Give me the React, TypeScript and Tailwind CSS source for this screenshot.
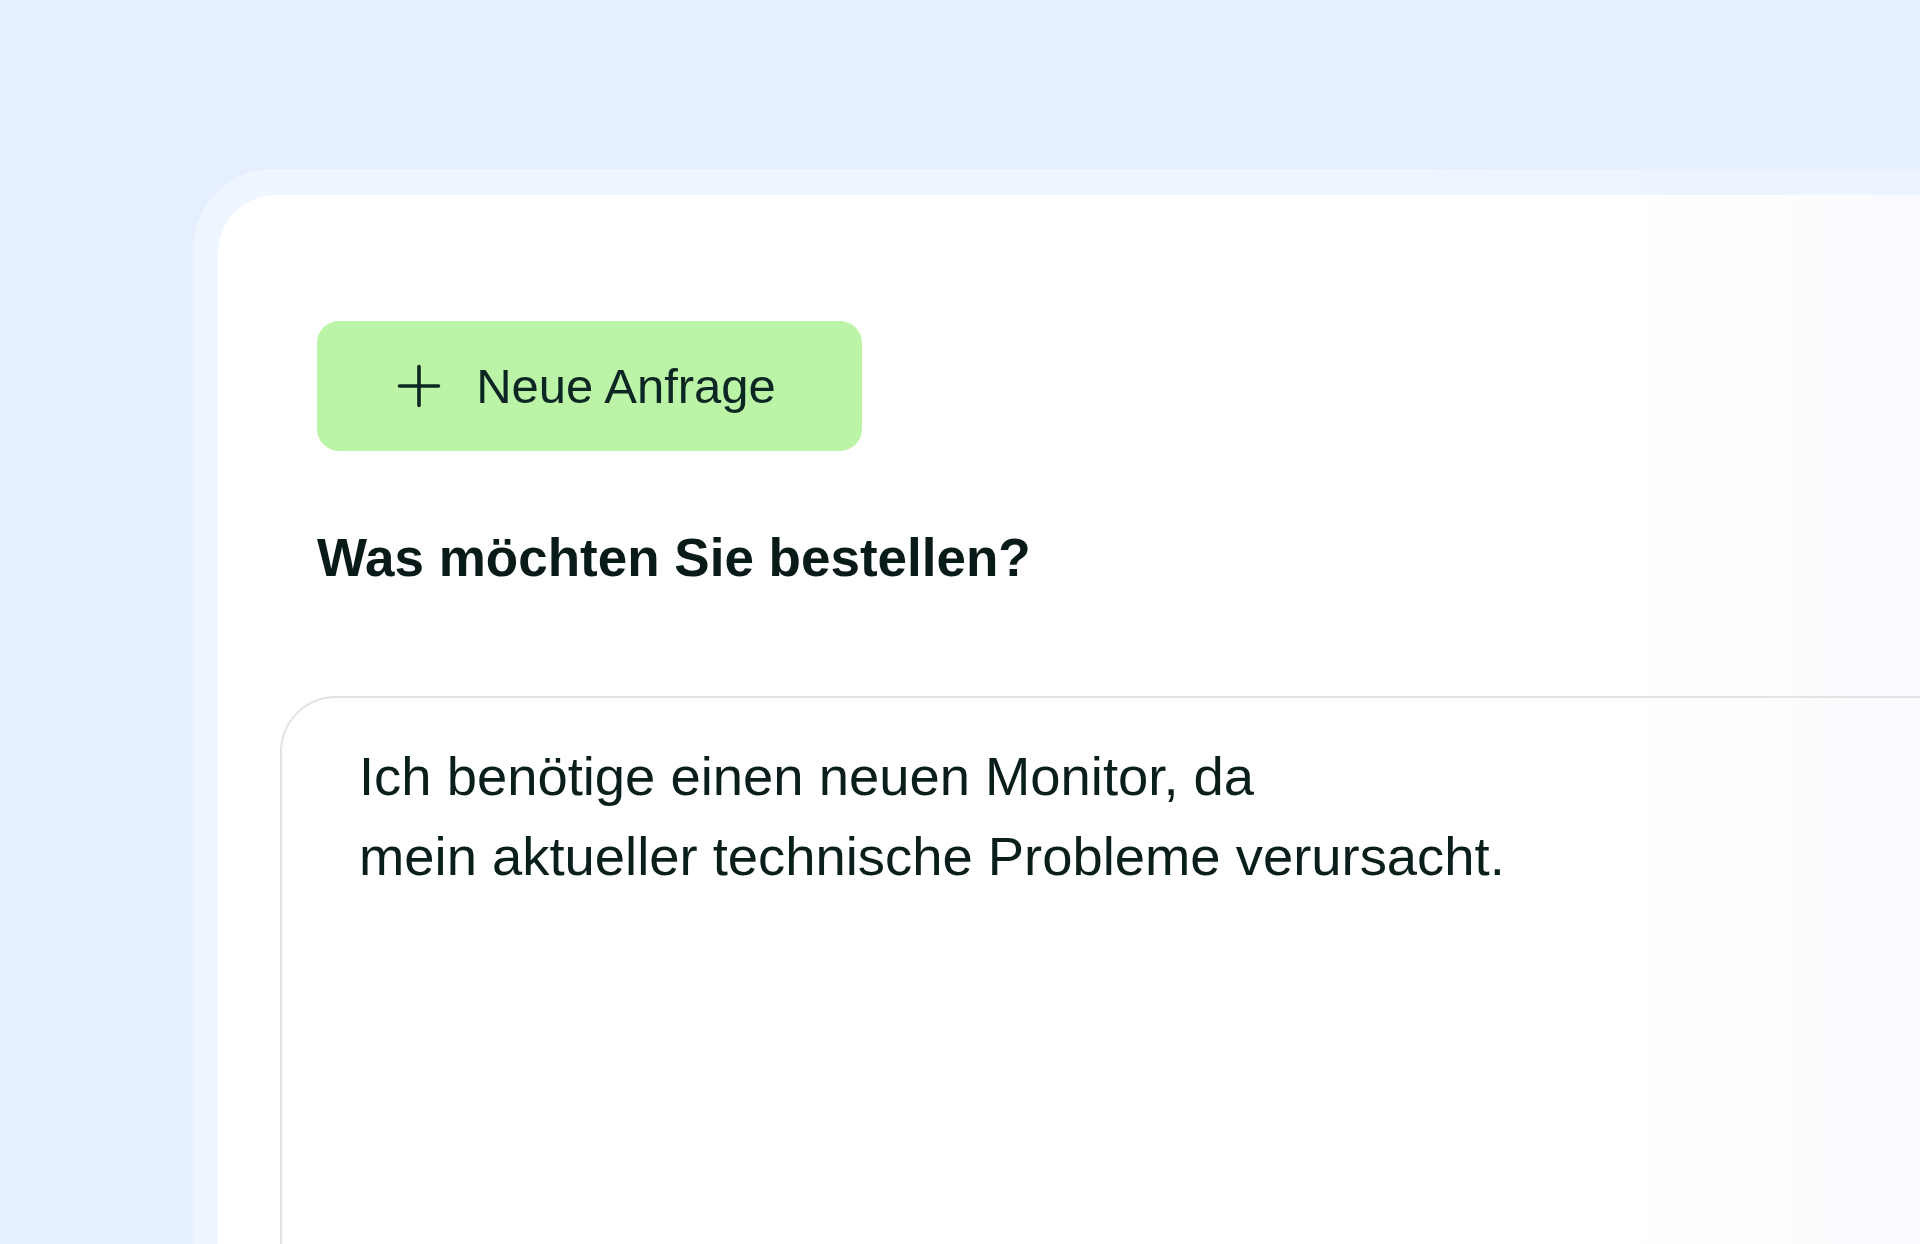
import React from "react";

function PlusIcon() {
  return (
    <svg width="44" height="44" viewBox="0 0 44 44" fill="none" aria-hidden="true">
      <path d="M22 2.5V41.5M2.5 22H41.5" stroke="#0c2723" strokeWidth="3.6" strokeLinecap="round" />
    </svg>
  );
}

export default function App() {
  return (
    <div className="h-[1244px] w-[1920px] overflow-hidden bg-[#e6effe] pl-[193px] pt-[169px] font-['Liberation_Sans',Arial,sans-serif]">
      <div className="h-[1200px] w-[1900px] rounded-tl-[80px] bg-[linear-gradient(to_right,#eff6ff_60%,#edf3fd_100%)] pl-[25px] pt-[26px]">
        <div className="h-full w-full rounded-tl-[58px] bg-[linear-gradient(to_right,#ffffff_0%,#ffffff_74%,#f6f8fd_100%)] pl-[62px] pt-[126px]">
          <button
            type="button"
            className="ml-[37px] flex h-[130px] w-[545px] items-center justify-center gap-[35px] rounded-[22px] bg-[#bbf4a6] pr-[6px] text-[49px] leading-none text-[#0c2723]"
          >
            <PlusIcon />
            <span>Neue Anfrage</span>
          </button>

          <h2 className="ml-[37px] mt-[80px] text-[53px] font-bold leading-[53px] text-[#081b18]">
            Was möchten Sie bestellen?
          </h2>

          <div className="mt-[112px] h-[700px] w-[1800px] rounded-[56px] border-2 border-[#e3e3e3] pl-[77px] pt-[39px] text-[54.4px] leading-[80px] text-[#0a1f1c]">
            <p>Ich benötige einen neuen Monitor, da</p>
            <p>mein aktueller technische Probleme verursacht.</p>
          </div>
        </div>
      </div>
    </div>
  );
}
